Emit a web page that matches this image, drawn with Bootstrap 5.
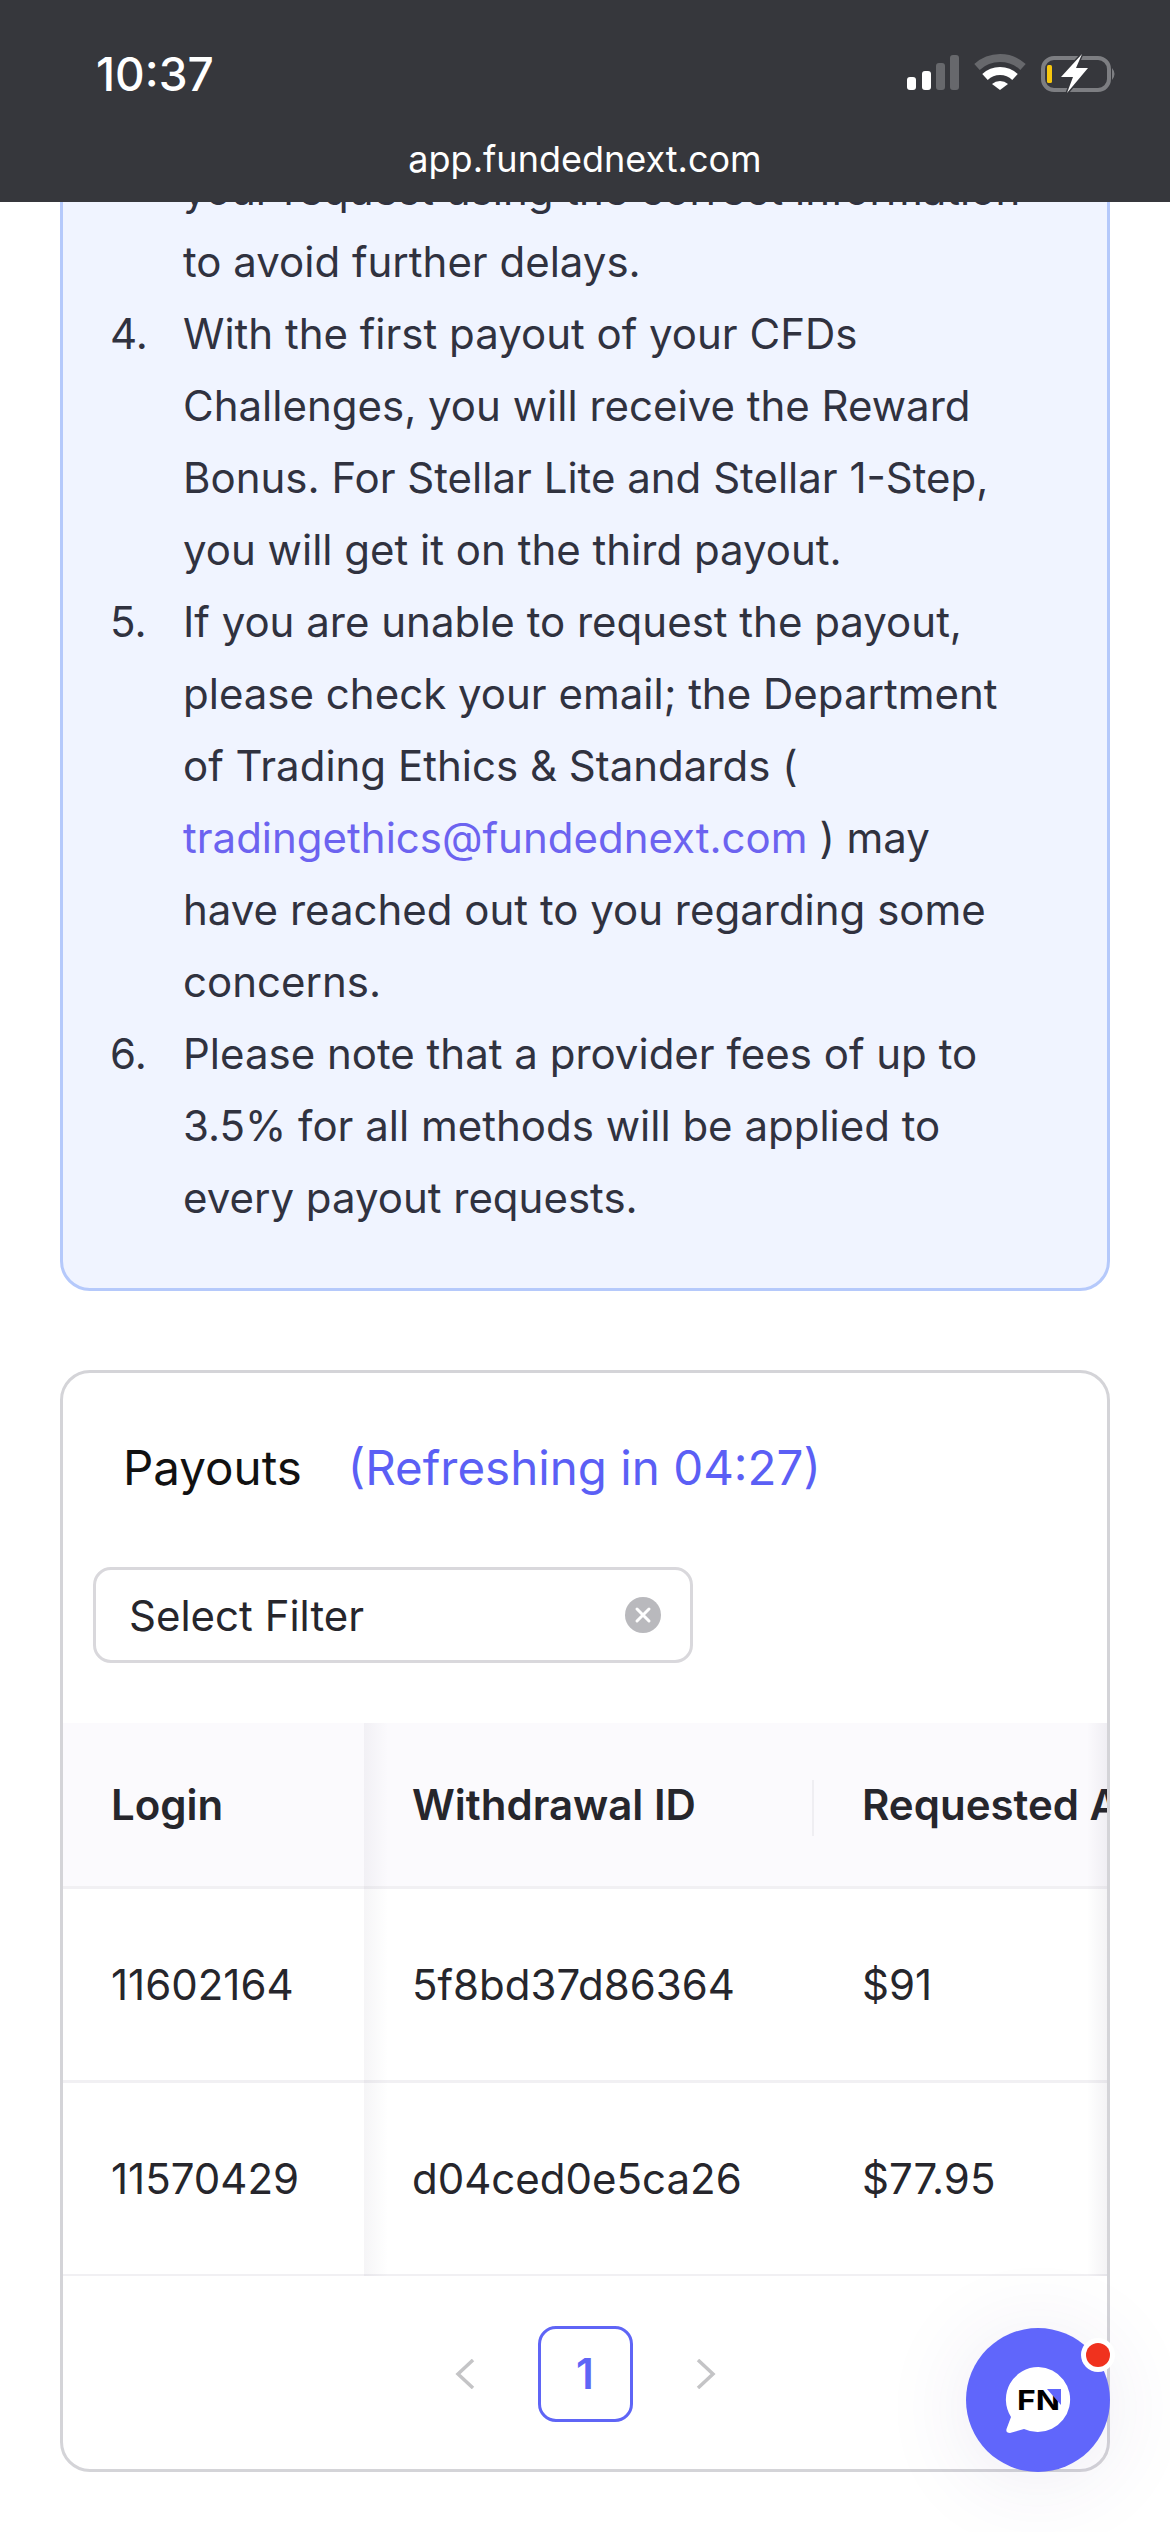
<!DOCTYPE html>
<html lang="en">
<head>
  <meta charset="UTF-8">
  <title>Payouts</title>
  <meta name="viewport" content="width=device-width, initial-scale=1" />
  <link href="https://cdn.jsdelivr.net/npm/bootstrap@5.3.0/dist/css/bootstrap.min.css" rel="stylesheet">
  <style>
    html, body {
      height: 2532px;
      overflow: hidden;
    }

    body {
      background: #fff;
      font-family: Inter, "Liberation Sans", sans-serif;
      color: #30323f;
    }

    .phone-bar {
      position: relative;
      z-index: 5;
      height: 202px;
      background: #36373c;
      color: #fff;
      padding: 0 52px 0 96px;
    }

    .phone-time {
      font-size: 46px;
      font-weight: 500;
      line-height: 56px;
      padding-top: 46px;
    }

    .phone-icons {
      margin-top: 53px;
      width: 212px;
      height: 42px;
    }

    .phone-url {
      position: absolute;
      left: 0;
      right: 0;
      top: 135px;
      text-align: center;
      font-size: 36px;
      line-height: 48px;
    }

    .page-wrap {
      margin-top: -82px;
      padding: 0 60px;
    }

    .notice-box {
      background: #f0f4ff;
      border: 3px solid #b5c9fb;
      border-radius: 30px;
      padding: 31px 77px 54px 47px;
      margin-bottom: 79px;
      font-size: 42px;
      line-height: 72px;
    }

    .notice-list {
      list-style: none;
      counter-reset: notice 2;
      padding: 0;
      margin: 0;
    }

    .notice-list li {
      display: flex;
      counter-increment: notice;
    }

    .notice-list li::before {
      content: counter(notice) ".";
      flex: 0 0 73px;
    }

    /* item 3 starts above the fold, only its tail is on screen */
    .notice-list li.item-tail::before {
      content: "";
    }

    .notice-list a {
      color: #6c63f0;
      text-decoration: none;
    }

    .payout-box {
      height: 1102px;
      border: 3px solid #d4d4d8;
      border-radius: 30px;
      overflow: hidden;
      background: #fff;
    }

    .payout-title {
      padding: 63px 0 0 60px;
      font-size: 47.5px;
      line-height: 64px;
      color: #111;
      gap: 46px;
    }

    .payout-title span + span {
      color: #5b5ff5;
    }

    .filter-box {
      width: 600px;
      height: 96px;
      margin: 67px 0 60px 30px;
      padding: 0 28px 0 33px;
      border: 3px solid #d9d8dc;
      border-radius: 18px;
      font-size: 42px;
      color: #26262c;
    }

    .filter-clear {
      width: 38px;
      height: 38px;
    }

    .table-clip {
      position: relative;
      overflow: hidden;
      height: 553px;
    }

    .table-clip::after {
      content: "";
      position: absolute;
      top: 0;
      bottom: 0;
      right: 0;
      width: 20px;
      background: linear-gradient(to left, rgba(30, 20, 60, .05), transparent);
    }

    .payout-table {
      width: 1300px;
      table-layout: fixed;
      margin: 0;
      font-size: 42px;
      color: #26262c;
    }

    .payout-table th,
    .payout-table td {
      position: relative;
      padding: 0 0 0 48px;
      vertical-align: middle;
      border-bottom: 3px solid #f1f0f3;
      white-space: nowrap;
      box-shadow: none;
    }

    .payout-table th {
      height: 164px;
      background: #fbfafd;
      font-weight: 600;
    }

    .payout-table td {
      height: 194px;
      font-weight: 400;
    }

    .payout-table th:first-child::after,
    .payout-table td:first-child::after {
      content: "";
      position: absolute;
      z-index: 1;
      top: 0;
      bottom: -3px;
      right: -24px;
      width: 24px;
      background: linear-gradient(to right, rgba(30, 20, 60, .045), transparent);
    }

    .payout-table th:nth-child(2)::after {
      content: "";
      position: absolute;
      top: 57px;
      bottom: 50px;
      right: 0;
      width: 2px;
      background: #efeef2;
    }

    .pager-row {
      height: 195px;
      gap: 63px;
    }

    .pager-arrow {
      width: 20px;
      height: 30px;
    }

    .pager-num {
      width: 95px;
      height: 96px;
      border: 3px solid #5f65f6;
      border-radius: 18px;
      color: #5f65f6;
      font-size: 42px;
      font-weight: 600;
    }

    .chat-btn {
      position: absolute;
      left: 966px;
      top: 2328px;
      width: 144px;
      height: 144px;
      border-radius: 50%;
      background: #6066fb;
      box-shadow: 0 8px 90px rgba(70, 50, 130, .1);
      z-index: 4;
    }

    .chat-dot {
      position: absolute;
      left: 120px;
      top: 15px;
      width: 24px;
      height: 24px;
      border-radius: 50%;
      background: #f0321e;
      box-shadow: 0 0 0 5px #fff;
    }

    .chat-logo {
      position: absolute;
      left: 36px;
      top: 36px;
      width: 72px;
      height: 72px;
    }
  </style>
</head>
<body class="position-relative">
  <div class="phone-bar d-flex justify-content-between align-items-start">
    <div class="phone-time">10:37</div>
    <svg class="phone-icons" viewBox="0 0 212 42" aria-hidden="true">
      <rect x="1" y="24" width="9" height="13" rx="3" fill="#fff"/>
      <rect x="16" y="18" width="9" height="19" rx="3" fill="#fff"/>
      <rect x="30" y="10" width="9" height="27" rx="3" fill="#67686c"/>
      <rect x="44" y="2" width="9" height="35" rx="3" fill="#67686c"/>
      <path d="M71 14 A34 34 0 0 1 117 14" fill="none" stroke="#67686c" stroke-width="8"/>
      <path d="M79 24 A22 22 0 0 1 109 24" fill="none" stroke="#fff" stroke-width="8"/>
      <path d="M86 31 A12 12 0 0 1 102 31 L94 37 Z" fill="#fff"/>
      <rect x="137" y="5" width="66" height="32" rx="11" fill="none" stroke="#7d7e82" stroke-width="4"/>
      <path d="M206 15 q5 6 0 12 Z" fill="#7d7e82"/>
      <rect x="141" y="12" width="5" height="18" rx="1.5" fill="#f7c70e"/>
      <path d="M176 1 L155 24 H167 L161 40 L182 15 H170 Z" fill="#fff" stroke="#36373c" stroke-width="3" paint-order="stroke"/>
    </svg>
    <div class="phone-url">app.fundednext.com</div>
  </div>

  <div class="page-wrap">
    <div class="notice-box">
      <ol class="notice-list">
        <li class="item-tail"><span>your request using the correct information to avoid further delays.</span></li>
        <li><span>With the first payout of your CFDs Challenges, you will receive the Reward Bonus. For Stellar Lite and Stellar 1-Step, you will get it on the third payout.</span></li>
        <li><span>If you are unable to request the payout, please check your email; the Department of Trading Ethics &amp; Standards ( <a href="#">tradingethics@fundednext.com</a> ) may have reached out to you regarding some concerns.</span></li>
        <li><span>Please note that a provider fees of up to 3.5% for all methods will be applied to every payout requests.</span></li>
      </ol>
    </div>

    <div class="payout-box">
      <div class="payout-title d-flex">
        <span>Payouts</span>
        <span>(Refreshing in 04:27)</span>
      </div>
      <div class="filter-box d-flex align-items-center justify-content-between">
        <span>Select Filter</span>
        <svg class="filter-clear" viewBox="0 0 38 38" aria-hidden="true">
          <circle cx="19" cy="19" r="18" fill="#b9b9bd"/>
          <path d="M13 13 L25 25 M25 13 L13 25" stroke="#fff" stroke-width="3" stroke-linecap="round"/>
        </svg>
      </div>
      <div class="table-clip">
        <table class="table payout-table">
          <colgroup>
            <col style="width: 301px">
            <col style="width: 450px">
            <col style="width: 549px">
          </colgroup>
          <thead>
            <tr><th>Login</th><th>Withdrawal ID</th><th>Requested Amount</th></tr>
          </thead>
          <tbody>
            <tr><td>11602164</td><td>5f8bd37d86364</td><td>$91</td></tr>
            <tr><td>11570429</td><td>d04ced0e5ca26</td><td>$77.95</td></tr>
          </tbody>
        </table>
      </div>
      <div class="pager-row d-flex justify-content-center align-items-center">
        <svg class="pager-arrow" viewBox="0 0 20 30" aria-hidden="true"><path d="M18 1 L3 15 L18 29" fill="none" stroke="#c4c4c6" stroke-width="3.5"/></svg>
        <div class="pager-num d-flex align-items-center justify-content-center">1</div>
        <svg class="pager-arrow" viewBox="0 0 20 30" aria-hidden="true"><path d="M2 1 L17 15 L2 29" fill="none" stroke="#c4c4c6" stroke-width="3.5"/></svg>
      </div>
    </div>
  </div>

  <div class="chat-btn">
    <svg class="chat-logo" viewBox="0 0 72 72" aria-hidden="true">
      <path d="M36.5 3 A32.5 32.5 0 1 1 22 65 L8 69 Q3.500 69 4.500 65 L9 53 A32.500 32.500 0 0 1 36.500 3 Z" fill="#fff"/>
      <text x="15" y="46" font-family="Inter, sans-serif" font-size="27.500" font-weight="700" fill="#000" textLength="43" lengthAdjust="spacingAndGlyphs">FN</text>
      <path d="M45 25 H59 V41 Z" fill="#6066fb"/>
    </svg>
    <span class="chat-dot"></span>
  </div>

  <script src="https://cdn.jsdelivr.net/npm/bootstrap@5.3.0/dist/js/bootstrap.bundle.min.js"></script>
</body>
</html>
